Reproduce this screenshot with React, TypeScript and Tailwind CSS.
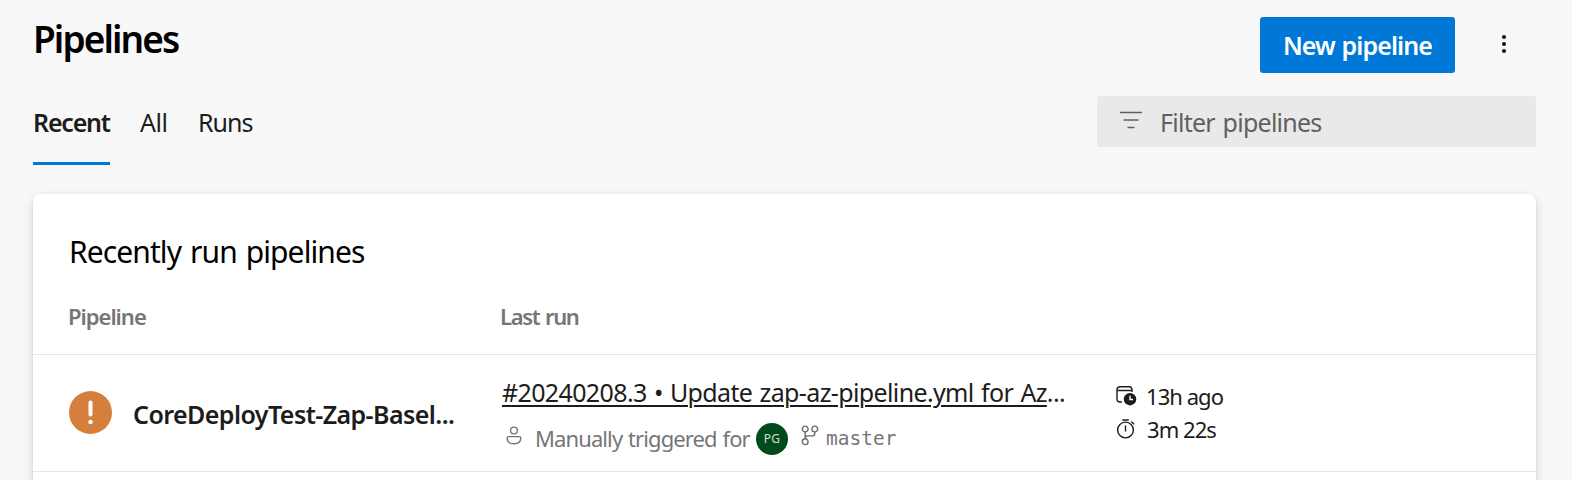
import React from "react";

function FilterIcon() {
  return (
    <svg width="22" height="18" viewBox="0 0 22 18" className="shrink-0" stroke="#5f5f5f" strokeWidth="1.6" fill="none">
      <path d="M0 1.5h22M3.500 9h15M7.500 16.500h7" />
    </svg>
  );
}

function PersonIcon() {
  return (
    <svg width="16" height="19" viewBox="0 0 16 19" className="shrink-0" stroke="#767676" strokeWidth="1.4" fill="none">
      <circle cx="8" cy="4.5" r="3.4" />
      <path d="M2.6 10.6h10.8c.9 0 1.4.6 1.4 1.4 0 3.700-2.700 5.800-6.800 5.800s-6.800-2.100-6.800-5.800c0-.8.5-1.400 1.400-1.400z" />
    </svg>
  );
}

function BranchIcon() {
  return (
    <svg width="18" height="21" viewBox="0 0 18 21" className="shrink-0" stroke="#6a6a6a" strokeWidth="1.4" fill="none">
      <circle cx="4.200" cy="4" r="2.900" />
      <circle cx="13.800" cy="4" r="2.900" />
      <circle cx="4.200" cy="16.700" r="2.900" />
      <path d="M4.200 6.900v6.900M13.800 6.900v1.600c0 1.500-.8 2.400-2.400 2.400H6.600c-1.500 0-2.400.8-2.400 2.400" />
    </svg>
  );
}

function CalendarClockIcon() {
  return (
    <svg width="21" height="20" viewBox="0 0 21 20" className="shrink-0" fill="none">
      <path d="M6 16H4A3 3 0 0 1 1 13V3.700A3 3 0 0 1 4 .8h9A3 3 0 0 1 16 3.700V6M1 4.500h15" stroke="#1c1c1c" strokeWidth="1.400" />
      <circle cx="14" cy="13.200" r="6.200" fill="#1c1c1c" />
      <path d="M14 9.800v3.700h3" stroke="#fff" strokeWidth="1.400" />
    </svg>
  );
}

function StopwatchIcon() {
  return (
    <svg width="20" height="20" viewBox="0 0 20 20" className="shrink-0" stroke="#1c1c1c" strokeWidth="1.400" fill="none">
      <circle cx="9.500" cy="11" r="7.900" />
      <path d="M9.500 6.500v6M6.300 1h6.400M15.400 2.600l2.600 2.600" />
    </svg>
  );
}

export default function App() {
  return (
    <div className="flex h-[480px] w-[1572px] flex-col overflow-hidden bg-[#f8f8f8] font-['Noto_Sans',sans-serif] text-[#1c1c1c]">
      <header className="flex h-[73px] shrink-0 items-start justify-between pl-[33px] pr-[60px] pt-[17px]">
        <h1 className="text-[37px] font-semibold leading-[44px] tracking-[-1.900px] text-black">Pipelines</h1>
        <div className="flex items-center">
          <button className="h-14 w-[195px] whitespace-nowrap rounded-[3px] bg-[#0078d7] text-[25px] font-semibold leading-[54px] tracking-[-0.900px] text-white [word-spacing:1px]">
            New pipeline
          </button>
          <button className="ml-[41px] flex h-14 w-4 flex-col items-center justify-center gap-[3px] pb-0.5" aria-label="More actions">
            <span className="size-1 rounded-full bg-[#111]" />
            <span className="size-1 rounded-full bg-[#111]" />
            <span className="size-1 rounded-full bg-[#111]" />
          </button>
        </div>
      </header>

      <nav className="flex h-[121px] shrink-0 items-start pl-[33px] pr-9 pt-[23px]">
        <a className="h-[69px] w-[77px] whitespace-nowrap border-b-[3px] border-[#0078d7] text-[25px] font-semibold leading-[53px] tracking-[-1.200px]">Recent</a>
        <a className="ml-[30px] w-[29px] whitespace-nowrap text-[25px] leading-[53px] tracking-[-0.500px]">All</a>
        <a className="ml-[29px] whitespace-nowrap text-[25px] leading-[53px] tracking-[-1px]">Runs</a>
        <div className="ml-auto flex h-[51px] w-[439px] items-center rounded-[3px] bg-[#e9e9e9] pl-[23px]">
          <span className="mb-1"><FilterIcon /></span>
          <span className="ml-[18px] whitespace-nowrap pt-px text-[25px] leading-[50px] tracking-[-0.750px] text-[#606060] [word-spacing:2px]">Filter pipelines</span>
        </div>
      </nav>

      <main className="ml-[33px] mr-9 flex h-[330px] w-[1503px] shrink-0 flex-col rounded-t-[7px] bg-white shadow-[0_5px_12px_rgba(0,0,0,0.132),0_1px_3px_rgba(0,0,0,0.108)]">
        <h2 className="h-[101px] pl-9 pt-[37px] text-[30px] leading-[42px] tracking-[-0.900px] text-black [word-spacing:2px]">Recently run pipelines</h2>
        <div className="flex h-[60px] shrink-0 border-b border-[#e6e6e6] pl-[35px] text-[22px] font-semibold leading-[42px] text-[#767676]">
          <span className="w-[432px] tracking-[-1px]">Pipeline</span>
          <span className="tracking-[-1.300px] [word-spacing:1px]">Last run</span>
        </div>
        <div className="flex h-[117px] shrink-0 border-b border-[#e6e6e6] pl-9">
          <div className="flex w-[432px] items-center pb-0.5">
            <svg width="43" height="43" viewBox="0 0 43 43" className="shrink-0">
              <circle cx="21.500" cy="21.500" r="21.500" fill="#d67f3c" />
              <path d="M21.500 11.500v12" stroke="#fff" strokeWidth="4" strokeLinecap="round" />
              <circle cx="21.500" cy="31" r="2.200" fill="#fff" />
            </svg>
            <span className="ml-[21px] whitespace-nowrap pt-1 text-[25px] font-semibold leading-9 tracking-[-0.570px]">CoreDeployTest-Zap-Basel...</span>
          </div>
          <div className="flex w-[615px] flex-col pt-[18px]">
            <div className="whitespace-nowrap pl-px text-[25px] leading-[38px] tracking-[-0.630px] [word-spacing:1.400px]">
              <a className="underline decoration-2 underline-offset-[3px]">#20240208.3 • Update zap-az-pipeline.yml for Az</a>...
            </div>
            <div className="mt-[12px] flex h-8 items-center text-[22px] leading-8 tracking-[-0.900px] text-[#767676]">
              <span className="mb-[8px] ml-[5px]"><PersonIcon /></span>
              <span className="ml-[13px] w-[221px] whitespace-nowrap pb-0.5 [word-spacing:1px]">Manually triggered for</span>
              <span className="flex size-8 shrink-0 items-center justify-center rounded-full bg-[#004b1c] pb-px text-[12px] tracking-[0.300px] text-white/80">PG</span>
              <span className="mb-[8px] ml-[13px]"><BranchIcon /></span>
              <span className="ml-[7px] font-['DejaVu_Sans_Mono',monospace] text-[19.500px] tracking-normal">master</span>
            </div>
          </div>
          <div className="flex flex-col pt-[24px] text-[22px] leading-[34px] tracking-[-0.950px]">
            <div className="flex h-[34px] items-center">
              <CalendarClockIcon />
              <span className="ml-[9px] whitespace-nowrap pb-px">13h ago</span>
            </div>
            <div className="flex h-[34px] items-center pb-0.5">
              <StopwatchIcon />
              <span className="ml-[11px] whitespace-nowrap">3m 22s</span>
            </div>
          </div>
        </div>
      </main>
    </div>
  );
}
